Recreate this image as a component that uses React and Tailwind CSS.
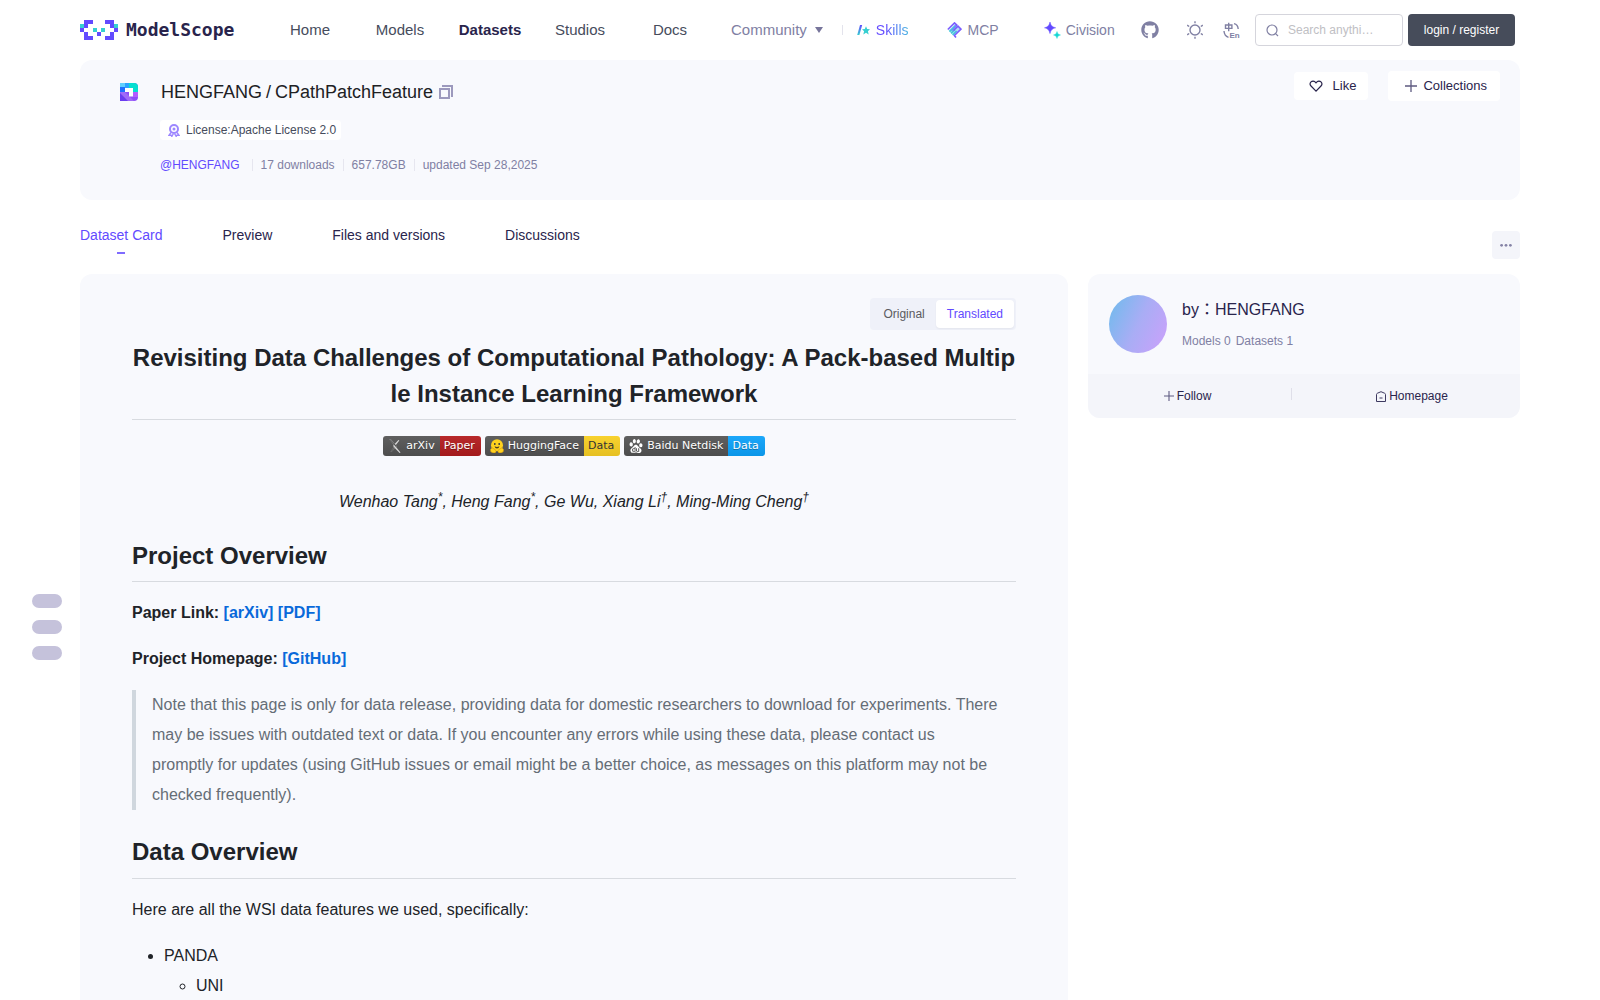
import React from "react";
import { SiArxiv, SiBaidu } from "react-icons/si";
import { FaGithub } from "react-icons/fa";

const LOGO_CELLS = [
  [1, 0, 0], [2, 0, 0], [6, 0, 0], [7, 0, 0],
  [0, 1, 1], [1, 1, 0], [7, 1, 0], [8, 1, 1],
  [0, 2, 0], [3, 2, 1], [5, 2, 1], [8, 2, 0],
  [1, 3, 0], [4, 3, 0], [7, 3, 0],
  [1, 4, 0], [2, 4, 0], [6, 4, 0], [7, 4, 0],
];

function LogoMark() {
  return (
    <svg width="38" height="20" viewBox="0 0 36 20" preserveAspectRatio="none" className="shrink-0" shapeRendering="crispEdges" aria-hidden="true">
      {LOGO_CELLS.map(([x, y, teal]) => (
        <rect key={x + "-" + y} x={x * 4} y={y * 4} width="4" height="4" fill={teal ? "#36cfd1" : "#624aff"} />
      ))}
    </svg>
  );
}

function SkillsIcon() {
  return (
    <svg width="13" height="12" viewBox="0 0 13 12" aria-hidden="true">
      <defs>
        <linearGradient id="slash" x1="0" y1="0" x2="0" y2="1">
          <stop offset="0" stopColor="#624aff" />
          <stop offset="1" stopColor="#36cfd1" />
        </linearGradient>
      </defs>
      <path d="M3 1h2.200L2.400 11H.2z" fill="url(#slash)" />
      <path d="M9 2.200l1.200 2.900 2.800.2-2.100 2 .8 3.200L9 8.800l-2.700 1.700.8-3.200-2.100-2 2.800-.2z" fill="#36cfd1" />
    </svg>
  );
}

function McpIcon() {
  return (
    <svg width="15" height="16" viewBox="0 0 15 16" fill="none" aria-hidden="true">
      <defs>
        <linearGradient id="mcp" gradientUnits="userSpaceOnUse" x1="3" y1="14" x2="10" y2="3">
          <stop offset="0" stopColor="#36d6d1" />
          <stop offset="1" stopColor="#5aa0f0" />
        </linearGradient>
      </defs>
      <path d="M1.500 8.500L8 2l6 5.500L7.500 14z" fill="url(#mcp)" opacity=".45" />
      <path d="M.8 7.500L7.500.9l2.300 2.200-5.300 5.300" stroke="#7a5cff" strokeWidth="1.600" />
      <path d="M2.500 9.600l6-6M4 11.400l4-4M5.600 13l4-4" stroke="url(#mcp)" strokeWidth="1.600" />
      <path d="M6.500 8.500L11 4.100l3 3L7.400 13.500l1.600 1.900" stroke="#7a5cff" strokeWidth="1.600" />
    </svg>
  );
}

function SparkIcon() {
  return (
    <svg width="17" height="17" viewBox="0 0 16 17" aria-hidden="true">
      <path d="M5.500 0C6.400 3.600 7.600 4.900 11.200 5.800 7.600 6.700 6.400 8 5.500 11.600 4.600 8 3.400 6.700 0 5.800 3.400 4.900 4.600 3.600 5.500 0z" fill="#624aff" stroke="#624aff" strokeWidth=".5" />
      <path d="M12.500 9.500c.6 2.200 1.300 3 3.500 3.500-2.200.5-2.900 1.300-3.500 3.500-.6-2.200-1.300-3-3.500-3.500 2.200-.5 2.900-1.300 3.500-3.500z" fill="#14d6d3" stroke="#14d6d3" strokeWidth=".4" />
    </svg>
  );
}

function SunIcon() {
  return (
    <svg width="16" height="18" viewBox="0 0 16 18" fill="none" stroke="currentColor" strokeWidth="1.400" aria-hidden="true">
      <circle cx="8" cy="9" r="5" />
      <path d="M8 .2v2M8 15.800v2M.2 4.200l2 1.300M13.800 5.500l2-1.300M.2 13.800l2-1.300M13.800 12.500l2 1.300" />
    </svg>
  );
}

function LanguageIcon() {
  return (
    <svg width="17" height="17" viewBox="0 0 17 17" fill="none" stroke="currentColor" strokeWidth="1.400" aria-hidden="true">
      <path d="M2.500 3h6.400v3.400H2.500zM5.700.8v8.400M11 1.600c2.600.6 4 2.300 4.200 5.400M1 9c.2 3.200 1.700 5.400 4.500 6.300" />
      <text x="6.500" y="16" fontSize="8" fontWeight="700" fontFamily="Liberation Sans, sans-serif" fill="currentColor" stroke="none">En</text>
    </svg>
  );
}

function DatasetIcon() {
  return (
    <svg width="18" height="18" viewBox="0 0 18 18" aria-hidden="true">
      <defs>
        <clipPath id="dshape"><path d="M0 0h14a4 4 0 0 1 4 4v10a4 4 0 0 1-4 4H0z" /></clipPath>
      </defs>
      <g clipPath="url(#dshape)">
        <rect width="18" height="18" fill="#8f4df8" />
        <rect width="5" height="5" fill="#5fd0ff" />
        <rect x="5" width="5" height="5" fill="#2ba3ff" />
        <rect x="9" width="9" height="9" fill="#05dfd0" />
        <rect y="4" width="5" height="5" fill="#1f6fff" />
        <rect x="13" y="9" width="5" height="5" fill="#b45cff" />
        <path d="M0 9h5l9 9H0z" fill="#a06af8" />
        <path d="M0 10l8 8H0z" fill="#6a3df0" />
        <path d="M5 5h8v8.500H9V9H5z" fill="#fff" />
      </g>
    </svg>
  );
}

function CopyIcon() {
  return (
    <svg width="14" height="14" viewBox="0 0 14 14" fill="none" stroke="#9c99bd" strokeWidth="2" aria-hidden="true">
      <path d="M1 4h9v9H1zM3 1h10v11" />
    </svg>
  );
}

function MedalIcon() {
  return (
    <svg width="12" height="13" viewBox="0 0 12 13" fill="none" stroke="#9d87ff" aria-hidden="true">
      <circle cx="6" cy="5" r="4" strokeWidth="2" />
      <circle cx="6" cy="5" r="1.500" fill="#9d87ff" stroke="none" />
      <path d="M3 8.500L1 11.300l2.200-.1.600 1.300 1.600-2.900M9 8.500l2 2.800-2.200-.1-.6 1.300-1.600-2.900" strokeWidth="1.300" />
    </svg>
  );
}

function HugIcon() {
  return (
    <svg width="14" height="14" viewBox="0 0 14 14" aria-hidden="true">
      <circle cx="7" cy="6.300" r="6" fill="#ffd21e" />
      <circle cx="4.800" cy="5" r=".9" fill="#32343d" />
      <circle cx="9.200" cy="5" r=".9" fill="#32343d" />
      <path d="M4.600 7.200Q7 8.800 9.400 7.200 9 9.600 7 9.600 5 9.600 4.600 7.200z" fill="#4a3a20" />
      <path d="M.3 10.500L2 8.800l1.200.6 2.600 1.800q.8 1.500-.5 2.500-2.600.7-4.600-1zM13.700 10.500L12 8.800l-1.200.6-2.600 1.800q-.8 1.500.5 2.500 2.600.7 4.600-1z" fill="#ffd21e" stroke="#c98a10" strokeWidth=".5" />
    </svg>
  );
}

function PlusIcon({ size }) {
  return (
    <svg width={size} height={size} viewBox="0 0 12 12" stroke="#5d5a80" strokeWidth="1.300" aria-hidden="true">
      <path d="M6 0v12M0 6h12" />
    </svg>
  );
}

function Badge({ icon, label, value, tone }) {
  return (
    <a href="#badge" className="flex h-5 overflow-hidden rounded-[3px] font-['DejaVu_Sans',sans-serif] text-[11px] leading-5 text-white [text-shadow:0_1px_0_rgba(1,1,1,0.3)]">
      <span className="flex items-center gap-1 bg-linear-to-b from-[#5f5f5f] to-[#4d4d4d] pr-[5px] pl-[5px]">
        {icon}
        <span>{label}</span>
      </span>
      <span className={"pr-1.5 pl-1 " + tone}>{value}</span>
    </a>
  );
}

const NAV = ["Home", "Models", "Datasets", "Studios", "Docs"];
const TABS = ["Dataset Card", "Preview", "Files and versions", "Discussions"];

function Header() {
  return (
    <header className="flex h-[60px] items-center pr-[85px] pl-20 text-[#8080a3]">
      <a href="#home" className="flex w-[185px] shrink-0 items-center gap-2" aria-label="ModelScope">
        <LogoMark />
        <span className="font-['DejaVu_Sans_Mono',monospace] text-lg leading-5 font-bold text-[#29244c]">ModelScope</span>
      </a>
      <nav className="flex items-center text-[15px] leading-5">
        {NAV.map((n) => (
          <a key={n} href="#nav" className={"w-[90px] text-center " + (n === "Datasets" ? "font-bold text-[#29244c]" : "text-[#464c5c]")}>
            {n}
          </a>
        ))}
        <button className="flex items-center gap-2 pl-4">
          Community
          <svg width="8" height="6" viewBox="0 0 8 6" fill="#77759b" aria-hidden="true"><path d="M0 0h8L4 6z" /></svg>
        </button>
        <span className="ml-[19px] h-2.5 w-px bg-[#e3e3ec]" />
        <a href="#skills" className="ml-3.5 flex items-center gap-1.5 text-sm">
          <SkillsIcon />
          <span className="bg-linear-to-r from-[#624aff] from-30% to-[#36cfd1] to-120% bg-clip-text text-transparent">Skills</span>
        </a>
        <a href="#mcp" className="ml-[38px] flex items-center gap-1.5 text-sm">
          <McpIcon />
          MCP
        </a>
        <a href="#civision" className="ml-[45px] flex items-center gap-[5px] text-sm">
          <SparkIcon />
          Civision
        </a>
      </nav>
      <div className="ml-auto flex items-center">
        <a href="#github" aria-label="GitHub"><FaGithub size={18} /></a>
        <button className="ml-7" aria-label="Theme"><SunIcon /></button>
        <button className="ml-5" aria-label="Language"><LanguageIcon /></button>
        <label className="ml-[15px] flex h-8 w-[148px] items-center gap-[9px] rounded border border-[#d5d5dc] px-2.5">
          <svg width="13" height="13" viewBox="0 0 13 13" fill="none" stroke="currentColor" strokeWidth="1.200" className="shrink-0" aria-hidden="true">
            <circle cx="6" cy="6" r="5" />
            <path d="M9.600 9.600l2.400 2.400" />
          </svg>
          <input aria-label="Search" placeholder="Search anythi…" className="w-full min-w-0 text-xs outline-none placeholder:text-[#c0c0c4]" />
        </label>
        <button className="ml-[5px] h-8 w-[107px] rounded bg-[#464c5a] text-xs text-white">login / register</button>
      </div>
    </header>
  );
}

function Hero() {
  return (
    <section className="flex h-[140px] rounded-xl bg-[#f8f9fd] pr-5 pl-10">
      <div className="w-10 shrink-0 pt-[23px]"><DatasetIcon /></div>
      <div className="flex-1 pt-[18px]">
        <h1 className="flex items-center gap-1.5 pl-px text-lg leading-7 text-[#202124]">
          <span className="flex gap-1">
            <span>HENGFANG</span>
            <span>/</span>
            <span>CPathPatchFeature</span>
          </span>
          <button aria-label="Copy name"><CopyIcon /></button>
        </h1>
        <div className="mt-3.5 flex">
          <a href="#license" className="flex h-5 items-center gap-1.5 rounded bg-white pr-[5px] pl-2 text-xs text-[#464c5c]">
            <MedalIcon />
            License:Apache License 2.0
          </a>
        </div>
        <div className="mt-[15px] flex h-5 items-center gap-2 text-xs text-[#8080a3]">
          <a href="#owner" className="mr-1 text-[#624aff]">@HENGFANG</a>
          <span className="h-3 w-px bg-[#e6e6ef]" />
          <span>17 downloads</span>
          <span className="h-3 w-px bg-[#e6e6ef]" />
          <span>657.78GB</span>
          <span className="h-3 w-px bg-[#e6e6ef]" />
          <span>updated Sep 28,2025</span>
        </div>
      </div>
      <div className="mt-[11px] flex h-[30px] items-center gap-5 text-[13px] text-[#29244c]">
        <button className="flex h-7 items-center gap-2.5 rounded bg-white pr-3 pl-[15px]">
          <svg width="14" height="12" viewBox="0 0 14 13" fill="none" stroke="#29244c" strokeWidth="1.300" aria-hidden="true">
            <path d="M7 12L1.600 6.500a3.200 3.200 0 0 1 0-4.400 3.100 3.100 0 0 1 4.400 0L7 3.100l1-1a3.100 3.100 0 0 1 4.400 0 3.200 3.200 0 0 1 0 4.400z" />
          </svg>
          Like
        </button>
        <button className="flex h-[30px] items-center gap-1.5 rounded bg-white pr-[13px] pl-[17px]">
          <PlusIcon size={12} />
          Collections
        </button>
      </div>
    </section>
  );
}

function Tabs() {
  return (
    <div className="flex h-[74px] justify-between">
      <div className="flex gap-[60px] pt-[25px] text-sm text-[#29244c]" role="tablist">
        {TABS.map((t, i) => (
          <button key={t} role="tab" aria-selected={i === 0} className={"flex flex-col items-center gap-[7px] self-start leading-5 " + (i === 0 ? "text-[#624aff]" : "")}>
            {t}
            {i === 0 && <span className="h-0.5 w-2 bg-[#7f6bff]" />}
          </button>
        ))}
      </div>
      <button aria-label="More" className="mt-[31px] flex size-7 items-center justify-center rounded bg-[#f4f5fa]">
        <svg width="12" height="4" viewBox="0 0 12 4" fill="#8583a6" aria-hidden="true">
          <circle cx="1.600" cy="2.300" r="1.400" /><circle cx="6" cy="2.300" r="1.400" /><circle cx="10.400" cy="2.300" r="1.400" />
        </svg>
      </button>
    </div>
  );
}

function Article() {
  return (
    <article className="min-w-0 flex-1 rounded-xl bg-[#f8f9fd] px-[52px] pt-6 pb-12 text-base leading-[30px] text-[#202328]">
      <div className="flex justify-end">
        <div className="flex h-8 items-center rounded bg-[#eff1f9] p-0.5 text-xs">
          <button className="px-[11px] text-[#5b5b60]">Original</button>
          <button className="h-7 rounded bg-white px-[11px] text-[#624aff] shadow-xs">Translated</button>
        </div>
      </div>
      <h1 className="mt-2.5 border-b border-[#d8dbe0] pb-[7px] text-center text-2xl leading-9 font-bold break-all">
        Revisiting Data Challenges of Computational Pathology: A Pack-based Multiple Instance Learning Framework
      </h1>
      <div className="mt-4 flex justify-center gap-1">
        <Badge icon={<SiArxiv size={14} color="#d8d8d8" />} label="arXiv" value="Paper" tone="bg-linear-to-b from-[#b8292b] to-[#a31a1c]" />
        <Badge icon={<HugIcon />} label="HuggingFace" value="Data" tone="bg-linear-to-b from-[#f8d22f] to-[#e6c022] text-[#333] [text-shadow:none]" />
        <Badge icon={<SiBaidu size={14} />} label="Baidu Netdisk" value="Data" tone="bg-linear-to-b from-[#1ba7fa] to-[#0b96e8]" />
      </div>
      <p className="mt-[31px] text-center italic">
        Wenhao Tang<sup>*</sup>, Heng Fang<sup>*</sup>, Ge Wu, Xiang Li<sup>†</sup>, Ming-Ming Cheng<sup>†</sup>
      </p>
      <h2 className="mt-[21px] border-b border-[#d8dbe0] pb-[7px] text-2xl leading-9 font-bold">Project Overview</h2>
      <p className="mt-4 font-bold">
        Paper Link: <a href="#arxiv" className="text-[#0969da]">[arXiv]</a> <a href="#pdf" className="text-[#0969da]">[PDF]</a>
      </p>
      <p className="mt-4 font-bold">
        Project Homepage: <a href="#github-repo" className="text-[#0969da]">[GitHub]</a>
      </p>
      <blockquote className="mt-4 border-l-4 border-[#d0d7de] px-4 text-[#656d76]">
        Note that this page is only for data release, providing data for domestic researchers to download for experiments. There may be issues with outdated text or data. If you encounter any errors while using these data, please contact us promptly for updates (using GitHub issues or email might be a better choice, as messages on this platform may not be checked frequently).
      </blockquote>
      <h2 className="mt-6 border-b border-[#d8dbe0] pb-2 text-2xl leading-9 font-bold">Data Overview</h2>
      <p className="mt-4">Here are all the WSI data features we used, specifically:</p>
      <ul className="mt-4 list-disc pl-8">
        <li>
          PANDA
          <ul className="list-[circle] pl-8">
            <li>UNI</li>
          </ul>
        </li>
      </ul>
    </article>
  );
}

function OwnerCard() {
  return (
    <aside className="w-[30%] shrink-0 self-start overflow-hidden rounded-xl bg-[#f8f9fd]">
      <div className="flex h-[100px] gap-[15px] pt-[21px] pl-[21px]">
        <div className="size-[58px] rounded-full bg-linear-[115deg] from-[#6cbcec] via-[#a9adf5] to-[#cda0fb]" />
        <div>
          <div className="mt-[3px] font-['Liberation_Sans','Noto_Sans_CJK_TC',sans-serif] text-base leading-6 text-[#29244c]" lang="zh-TW">by：HENGFANG</div>
          <div className="mt-[11px] flex gap-[5px] text-xs leading-4 text-[#8080a3]">
            <span>Models 0</span>
            <span>Datasets 1</span>
          </div>
        </div>
      </div>
      <div className="flex h-11 items-center bg-[#f4f5fa] text-xs text-[#29244c]">
        <button className="flex w-[47%] items-center justify-center gap-[3px] pr-1">
          <PlusIcon size={10} />
          Follow
        </button>
        <span className="mb-1 h-3 w-px bg-[#dfdfe9]" />
        <a href="#homepage" className="flex flex-1 items-center justify-center gap-[3px] pl-3">
          <svg width="10" height="11" viewBox="0 0 10 11" fill="none" stroke="#3d3960" aria-hidden="true">
            <path d="M.5 10.500V3.500Q.5 2.600 1.500 2.200L5 .7l3.500 1.500q1 .4 1 1.300v7zM3.500 7h3" />
          </svg>
          Homepage
        </a>
      </div>
    </aside>
  );
}

export default function App() {
  return (
    <div className="h-screen overflow-hidden bg-white font-['Liberation_Sans',Arial,sans-serif]">
      <Header />
      <main className="px-20">
        <Hero />
        <Tabs />
        <div className="flex gap-5">
          <Article />
          <OwnerCard />
        </div>
      </main>
      <div className="fixed top-[594px] left-8 flex flex-col gap-3">
        <button aria-label="Section 1" className="h-3.5 w-[30px] rounded-full bg-[#c5c2db]" />
        <button aria-label="Section 2" className="h-3.5 w-[30px] rounded-full bg-[#c5c2db]" />
        <button aria-label="Section 3" className="h-3.5 w-[30px] rounded-full bg-[#c5c2db]" />
      </div>
    </div>
  );
}
